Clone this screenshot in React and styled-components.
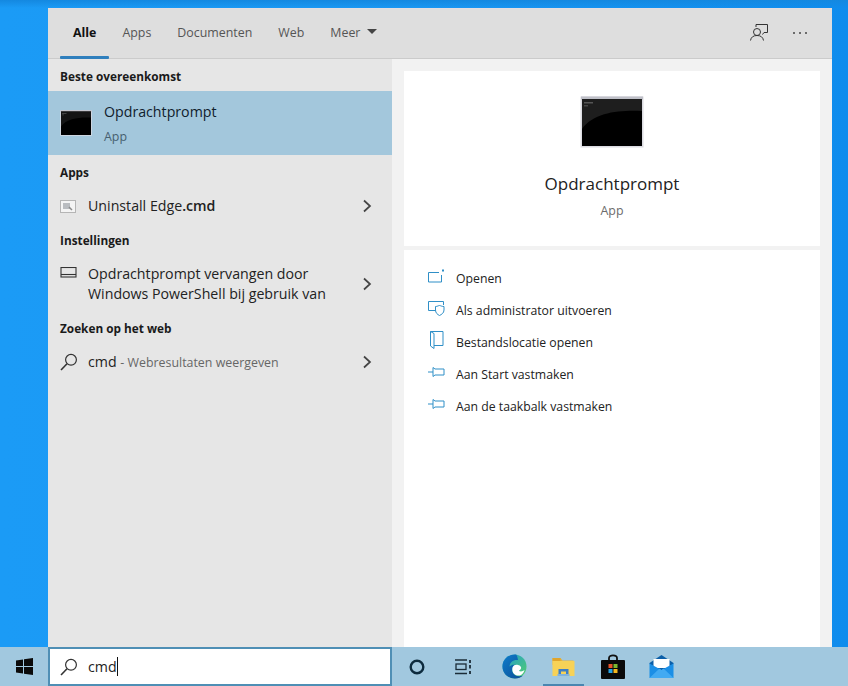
import React from "react";
import styled, { createGlobalStyle } from "styled-components";

const Global = createGlobalStyle`
  html, body { margin: 0; padding: 0; }
  body { font-family: "Open Sans", "Noto Sans", "Liberation Sans", sans-serif; color: #1f1f1f; }
  * { box-sizing: border-box; }
`;
const Desktop = styled.div`
  width: 848px; height: 686px; overflow: hidden; display: flex; flex-direction: column;
  background:
    linear-gradient(180deg, #1488e0 0, rgba(20,136,224,0) 8px),
    linear-gradient(90deg, #1b9bf6 0%, #1b97f2 50%, #0f8ced 100%);
`;
const Main = styled.div`
  flex: 1; min-height: 0; display: flex; padding: 8px 16px 0 48px;
`;
const Panel = styled.div`
  flex: 1; display: flex; flex-direction: column; background: #e6e6e6;
`;
const Header = styled.header`
  height: 51px; flex: none; display: flex; align-items: flex-start; justify-content: space-between;
  background: #dedede; border-top: 1px solid #e4dde0; border-bottom: 1px solid #cbcbcb;
`;
const Tabs = styled.nav`
  display: flex; padding-left: 12px; height: 50px;
`;
const Tab = styled.div`
  position: relative; height: 50px; padding: 0 13px 4px; display: flex; align-items: center; gap: 7px;
  font-size: 12.4px;
  color: ${p => (p.$active ? "#111" : "#555")};
  font-weight: ${p => (p.$active ? 700 : 400)};
  ${p => p.$active && `&::after { content: ""; position: absolute; left: 0; right: 0; bottom: 0; height: 3px; background: #2f7fbd; border-radius: 1px; }`}
`;
const Caret = styled.span`
  width: 0; height: 0; border-left: 5px solid transparent; border-right: 5px solid transparent;
  border-top: 5px solid #444; margin-top: -1px;
`;
const HeaderTools = styled.div`
  display: flex; align-items: center; gap: 24px; height: 47px; padding-right: 24px;
`;
const Body = styled.div`
  flex: 1; min-height: 0; display: flex;
`;
const Left = styled.section`
  width: 344px; flex: none; display: flex; flex-direction: column; background: #e6e6e6;
`;
const Heading = styled.h3`
  margin: 0; height: ${p => p.$h || 32}px; padding: ${p => p.$pt || 0}px 12px 0; display: flex; align-items: center;
  font-size: 11.8px; font-weight: 700; color: #1a1a1a;
`;
const BestRow = styled.div`
  height: 64px; flex: none; display: flex; align-items: center; gap: 12px; padding-left: 12px;
  background: #a3c7dc;
`;
const BestTexts = styled.div`
  display: flex; flex-direction: column; gap: 6px; margin-top: 1px;
`;
const BestTitle = styled.div`
  font-size: 14.2px; line-height: 20px; color: #10202c;
`;
const BestSub = styled.div`
  font-size: 12.4px; line-height: 17px; color: #47606f;
`;
const Row = styled.div`
  height: ${p => p.$h || 36}px; flex: none; display: flex; align-items: center; padding: 0 20px 0 12px;
`;
const RowIcon = styled.div`
  width: 28px; flex: none; display: flex; align-items: center; align-self: ${p => (p.$top ? "flex-start" : "center")};
  ${p => p.$top && "margin-top: 11px;"}
`;
const RowText = styled.div`
  flex: 1; font-size: 14.2px; line-height: 20px; color: #222;
  b { font-weight: 600; }
`;
const Muted = styled.span`
  font-size: 12.4px; color: #666;
`;
const Right = styled.section`
  flex: 1; display: flex; flex-direction: column; gap: 4px; padding: 12px 12px 0; background: #f2f2f2;
`;
const HeroCard = styled.div`
  height: 175px; flex: none; background: #fff; display: flex; flex-direction: column; align-items: center; padding-top: 25px;
`;
const HeroTitle = styled.div`
  margin-top: 24px; font-size: 17px; line-height: 24px; color: #222;
`;
const HeroSub = styled.div`
  margin-top: 6px; font-size: 12.4px; line-height: 17px; color: #6b6b6b;
`;
const ActionCard = styled.div`
  flex: 1; background: #fff; padding: 12px 24px; display: flex; flex-direction: column;
`;
const Action = styled.div`
  height: 32px; display: flex; align-items: center; gap: 11px; font-size: 12.25px; color: #222;
`;
const ActionIcon = styled.div`
  width: 17px; height: 20px; flex: none; margin-top: -4px; display: flex; align-items: center; justify-content: center;
`;
const Taskbar = styled.footer`
  height: 39px; flex: none; display: flex; align-items: stretch; background: #a1c8df;
`;
const StartButton = styled.div`
  width: 48px; flex: none; display: flex; align-items: center; justify-content: center;
`;
const SearchBox = styled.div`
  width: 344px; flex: none; display: flex; align-items: center; gap: 10px; padding: 0 10px;
  background: #fff; border: 2px solid #4f8fb5;
`;
const SearchText = styled.div`
  font-size: 14.2px; line-height: 20px; color: #222; display: flex; align-items: center;
`;
const Cursor = styled.span`
  display: inline-block; width: 1px; height: 19px; background: #111; margin-left: 0;
`;
const TrayIcons = styled.div`
  display: flex; align-items: center; flex: 1; padding-left: 0;
`;
const TrayItem = styled.div`
  position: relative; width: 49px; height: 39px; flex: none; display: flex; align-items: center; justify-content: center;
  ${p => p.$running && `&::after { content: ""; position: absolute; left: 4px; right: 4px; bottom: 0; height: 2px; background: #4a86b0; }`}
`;

const Console = ({ w, h, gloss = "#1e1e1e" }) => (
  <svg width={w} height={h} viewBox="0 0 64 52">
    <rect x="0.5" y="0.5" width="63" height="51" fill="#dcdce2" />
    <rect x="1" y="0.5" width="62" height="3" fill="#bfc0c8" />
    <rect x="2" y="3" width="60" height="47" fill="#000" />
    <path d="M2 3H62V15C40 14 14 16 2 33Z" fill={gloss} />
    <rect x="4" y="6" width="9" height="1.500" fill="#555" />
    <rect x="4" y="9" width="4" height="1.500" fill="#444" />
  </svg>
);
const Chevron = () => (
  <svg width="10" height="14" viewBox="0 0 10 14" fill="none" stroke="#444" strokeWidth="1.7"><path d="M2 1.5 8 7 2 12.5" /></svg>
);
const Lens = ({ size = 18, color = "#333" }) => (
  <svg width={size} height={size} viewBox="0 0 18 18" fill="none" stroke={color} strokeWidth="1.2">
    <circle cx="11" cy="6.8" r="5.4" /><path d="M7 10.8 1 17" strokeWidth="1.6" />
  </svg>
);
const Blue = { fill: "none", stroke: "#2f8fc7", strokeWidth: 1 };

const icons = {
  open: <svg width="17" height="14" viewBox="0 0 17 14" {...Blue}><path d="M11 3.5H.5v9.5h13V6" /><path d="M14 .5h2v2h-2z" fill="#2f8fc7" stroke="none" /></svg>,
  admin: <svg width="17" height="16" viewBox="0 0 17 16" {...Blue}><path d="M8 10.5H.5V1.500h15V5" /><path d="M7.500 6.500c2 0 3-1 4-1s2 1 4.500 1v3.500c0 3-2.500 4.500-4.500 5.500-2-1-4-2.500-4-5.500z" fill="#fff" /></svg>,
  folder: <svg width="14" height="18" viewBox="0 0 14 18" {...Blue}><path d="M.5.500h12.500v14h-9" /><path d="M.5.500 4 2.500V17.500L.5 15z" /></svg>,
  pin: <svg width="17" height="10" viewBox="0 0 17 10" {...Blue}><path d="M0 5H5" /><path d="M5 .5V9.500L7 8H16V2H7z" /></svg>,
};

const Windows = () => (
  <svg width="17" height="17" viewBox="0 0 17 17" fill="#0a0a0a"><path d="M0 2.400 7 1.400V8H0zM8 1.200 17 0V8H8zM0 9H7V15.600L0 14.600zM8 9H17V17L8 15.800z" /></svg>
);
const Cortana = () => (
  <svg width="16" height="16" viewBox="0 0 16 16" fill="none" stroke="#0d2b3e" strokeWidth="2.400"><circle cx="8" cy="8" r="6.300" /></svg>
);
const TaskView = () => (
  <svg width="21" height="16" viewBox="0 0 21 16" fill="none" stroke="#1b2c38" strokeWidth="1.300">
    <path d="M0 1H12M0 14.500H12" /><rect x="1" y="5" width="10" height="5.500" /><path d="M15 1V4M15 6V9.500M15 12V15" strokeWidth="1.800" />
  </svg>
);
const Edge = () => (
  <svg width="25" height="25" viewBox="0 0 25 25">
    <defs>
      <linearGradient id="edgeA" x1="0" y1="0" x2="1" y2="1"><stop offset="0" stopColor="#1e9bd6" /><stop offset="1" stopColor="#55cf6a" /></linearGradient>
      <linearGradient id="edgeB" x1="0" y1="0" x2="1" y2="1"><stop offset="0" stopColor="#0f7ccb" /><stop offset="1" stopColor="#0c4f96" /></linearGradient>
    </defs>
    <circle cx="12.500" cy="12.500" r="12" fill="url(#edgeA)" />
    <path d="M14 .6C6 .3.500 6 .5 12.500.5 19.500 6 24.500 13 24.500c3.500 0 6-1 8-3-4 1.500-9 .5-10.500-3.500-1-3 .5-6 3-7-2-.5-4-.2-6 1.500C8 8 11 5.500 16 6 15.500 3 15 1.500 14 .6Z" fill="url(#edgeB)" />
    <path d="M10.500 13.500c1-2.500 3.500-3 5.500-2.500 2.500.5 3.500 2 3 3.500-.5 1.500-2.500 2-2 2.500 2 1 4 .3 5.500-1-1 3.500-3.500 6-7 5.500-4-.5-5.800-4.500-5-8Z" fill="#fff" />
  </svg>
);
const Explorer = () => (
  <svg width="23" height="20" viewBox="0 0 22 20">
    <path d="M0 1H8L10 3.500H21V8H0Z" fill="#e8b53c" />
    <rect y="4" width="22" height="15" fill="#f7d257" />
    <rect y="1" width="8" height="3" fill="#e0a52c" />
    <path d="M6 17V12H16V17H13.500V14.500H8.500V17Z" fill="#3f7fc4" />
    <rect x="5" y="17" width="12" height="2" fill="#7fb2e0" />
  </svg>
);
const Store = () => (
  <svg width="24" height="25" viewBox="0 0 24 25">
    <path d="M8 7V4C8 .5 16 .5 16 4V7" fill="none" stroke="#111" strokeWidth="1.800" />
    <rect y="6" width="24" height="19" rx="1" fill="#0a0a0a" />
    <rect x="7.500" y="10" width="4" height="4" fill="#e8552b" />
    <rect x="12.500" y="10" width="4" height="4" fill="#7cb82f" />
    <rect x="7.500" y="15" width="4" height="4" fill="#26a5e8" />
    <rect x="12.500" y="15" width="4" height="4" fill="#f5b81f" />
  </svg>
);
const Mail = () => (
  <svg width="25" height="23" viewBox="0 0 24 23">
    <path d="M0 8 12 0 24 8V9L12 16 0 9Z" fill="#0b5fa8" />
    <rect x="4" y="4" width="16" height="9" fill="#fff" />
    <path d="M0 8.500 12 15 24 8.500V23H0Z" fill="#1b8fe6" />
    <path d="M0 23 10 13.500 12 15 14 13.500 24 23Z" fill="#42aaf2" />
  </svg>
);

const actions = [
  ["open", "Openen"],
  ["admin", "Als administrator uitvoeren"],
  ["folder", "Bestandslocatie openen"],
  ["pin", "Aan Start vastmaken"],
  ["pin", "Aan de taakbalk vastmaken"],
];

export default function App() {
  return (
    <Desktop>
      <Global />
      <Main>
        <Panel>
          <Header>
            <Tabs>
              <Tab $active>Alle</Tab>
              <Tab>Apps</Tab>
              <Tab>Documenten</Tab>
              <Tab>Web</Tab>
              <Tab>Meer <Caret /></Tab>
            </Tabs>
            <HeaderTools>
              <svg width="18" height="17" viewBox="0 0 18 17" fill="none" stroke="#333" strokeWidth="1">
                <path d="M6 3V.5H17.500V8.500H14L12.500 10.500" />
                <circle cx="7" cy="8" r="3.500" />
                <path d="M.5 16.500C1 13 3.500 11.500 7 11.500S13 13 13.500 16.500" />
              </svg>
              <svg width="16" height="4" viewBox="0 0 16 4" fill="#444">
                <circle cx="2" cy="2" r="1" /><circle cx="8" cy="2" r="1" /><circle cx="14" cy="2" r="1" />
              </svg>
            </HeaderTools>
          </Header>
          <Body>
            <Left>
              <Heading $pt={2}>Beste overeenkomst</Heading>
              <BestRow>
                <Console w={32} h={26} gloss="#141414" />
                <BestTexts>
                  <BestTitle>Opdrachtprompt</BestTitle>
                  <BestSub>App</BestSub>
                </BestTexts>
              </BestRow>
              <Heading $h={33}>Apps</Heading>
              <Row>
                <RowIcon>
                  <svg width="16" height="13" viewBox="0 0 16 13">
                    <rect x=".5" y=".5" width="15" height="12" fill="#f4f4f4" stroke="#b5b5b5" />
                    <rect x="3" y="3" width="7" height="6" fill="#b9bcc0" />
                    <path d="M9 7 12 10" stroke="#8c8c8c" strokeWidth="1.500" />
                  </svg>
                </RowIcon>
                <RowText>Uninstall Edge<b>.cmd</b></RowText>
                <Chevron />
              </Row>
              <Heading>Instellingen</Heading>
              <Row $h={56}>
                <RowIcon $top>
                  <svg width="17" height="11" viewBox="0 0 17 11" fill="none" stroke="#333" strokeWidth="1.100">
                    <rect x="1" y=".5" width="15" height="9.500" /><path d="M1 7.500H16" />
                  </svg>
                </RowIcon>
                <RowText>Opdrachtprompt vervangen door<br />Windows PowerShell bij gebruik van</RowText>
                <Chevron />
              </Row>
              <Heading>Zoeken op het web</Heading>
              <Row>
                <RowIcon><Lens /></RowIcon>
                <RowText>cmd <Muted>- Webresultaten weergeven</Muted></RowText>
                <Chevron />
              </Row>
            </Left>
            <Right>
              <HeroCard>
                <Console w={64} h={52} />
                <HeroTitle>Opdrachtprompt</HeroTitle>
                <HeroSub>App</HeroSub>
              </HeroCard>
              <ActionCard>
                {actions.map(([icon, label]) => (
                  <Action key={label}>
                    <ActionIcon>{icons[icon]}</ActionIcon>
                    {label}
                  </Action>
                ))}
              </ActionCard>
            </Right>
          </Body>
        </Panel>
      </Main>
      <Taskbar>
        <StartButton><Windows /></StartButton>
        <SearchBox>
          <Lens />
          <SearchText>cmd<Cursor /></SearchText>
        </SearchBox>
        <TrayIcons>
          <TrayItem><Cortana /></TrayItem>
          <TrayItem><TaskView /></TrayItem>
          <TrayItem><Edge /></TrayItem>
          <TrayItem $running><Explorer /></TrayItem>
          <TrayItem><Store /></TrayItem>
          <TrayItem><Mail /></TrayItem>
        </TrayIcons>
      </Taskbar>
    </Desktop>
  );
}
